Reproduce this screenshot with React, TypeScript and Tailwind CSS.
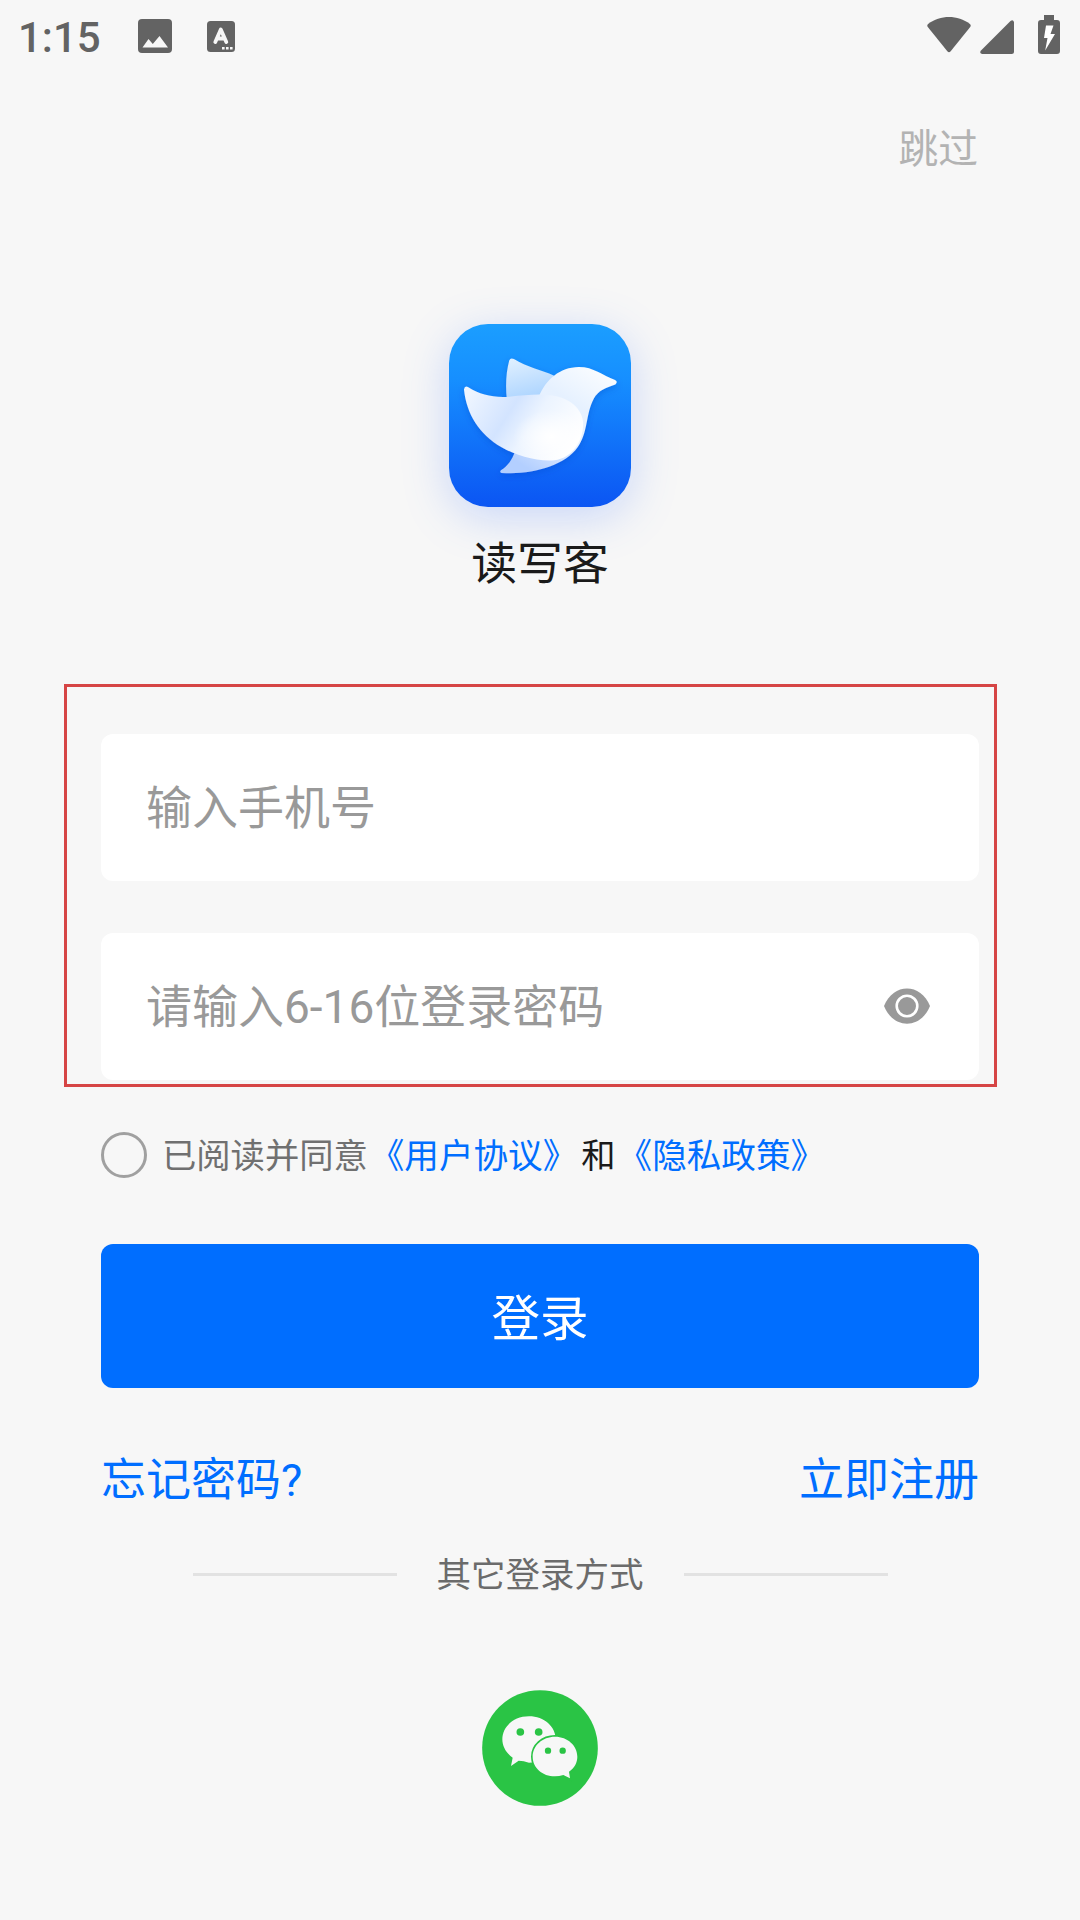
import type { ReactNode } from 'react';

const providerDivider = 'h-[3px] w-[204px] bg-[#e2e2e2]';

function StatusBar() {
  return (
    <header className="flex h-[72px] shrink-0 items-center justify-between pl-[18px] pr-5 text-[#636363]">
      <div className="flex items-center">
        <span className="w-[120px] pt-[3px] text-[42px] font-medium leading-[72px]">1:15</span>
        <svg className="h-[34px] w-[34px]" viewBox="0 0 34 34">
          <rect width="34" height="34" rx="4" fill="currentColor" />
          <path d="M4.500 28.500 10.500 20l4.300 5L21.500 17l8.500 11.500z" fill="#f7f7f7" />
        </svg>
        <svg className="ml-[35px] h-[31px] w-[28px]" viewBox="0 0 28 31">
          <rect width="28" height="31" rx="3.500" fill="currentColor" />
          <path d="M8.300 21 13.800 8.500l5.500 12.500M10.500 17.500h6.600" fill="none" stroke="#f7f7f7" strokeWidth="3.800" strokeLinecap="round" strokeLinejoin="round" />
          <path d="M15 26h2.600v2.600H15zM19 26h2.600v2.600H19zM23 26h2.600v2.600H23z" fill="#f7f7f7" />
        </svg>
      </div>
      <div className="flex items-end pb-[3px]">
        <svg className="mb-px h-[36px] w-[46px]" viewBox="0 0 46 37">
          <path d="M1.500 7.200C14-2.300 32-2.300 44.500 7.200q1.500 1.400.3 3L24.500 35.500q-1.500 1.700-3 0L1.200 10.200q-1.200-1.600.3-3z" fill="currentColor" />
        </svg>
        <svg className="ml-2 h-[34px] w-[34px]" viewBox="0 0 34 34">
          <path d="M1 30.500 30.500 1Q33-.8 34 2v29.500q0 2.500-2.500 2.500H2Q-1 33 1 30.500z" fill="currentColor" />
        </svg>
        <svg className="ml-6 h-[39px] w-[22px]" viewBox="0 0 22 39">
          <path d="M6 0h10v5h3q3 0 3 3v28q0 3-3 3H3q-3 0-3-3V8q0-3 3-3h3z" fill="currentColor" />
          <path d="M8 10.500h7.500L12.500 19H17L7.200 35.500 9.500 23H6z" fill="#fff" />
        </svg>
      </div>
    </header>
  );
}

function BirdLogo() {
  return (
    <svg
      className="h-[183px] w-[182px] rounded-[39px] shadow-[0_10px_46px_rgba(80,130,255,0.28)]"
      viewBox="116 102 547 549"
    >
      <defs>
        <linearGradient id="tile" x1="0" y1="0" x2="0" y2="1">
          <stop offset="0" stopColor="#1b9eff" />
          <stop offset="0.3" stopColor="#168fff" />
          <stop offset="1" stopColor="#0b55f3" />
        </linearGradient>
        <linearGradient id="backWing" x1="0" y1="0" x2="0.3" y2="1">
          <stop offset="0" stopColor="#e2f1ff" />
          <stop offset="1" stopColor="#aed5ff" />
        </linearGradient>
        <linearGradient id="body" x1="1" y1="0" x2="0.3" y2="1">
          <stop offset="0" stopColor="#fff" />
          <stop offset="0.4" stopColor="#e6f1ff" />
          <stop offset="0.65" stopColor="#e9f2ff" />
          <stop offset="1" stopColor="#b3cfff" />
        </linearGradient>
        <linearGradient id="frontWing" x1="0" y1="0.2" x2="1" y2="0.6">
          <stop offset="0" stopColor="#eef5ff" />
          <stop offset="0.38" stopColor="#d3e4ff" />
          <stop offset="0.6" stopColor="#ecf4ff" />
          <stop offset="1" stopColor="#fff" />
        </linearGradient>
        <radialGradient id="belly">
          <stop offset="0" stopColor="#fff" />
          <stop offset="1" stopColor="#fff" stopOpacity="0" />
        </radialGradient>
        <clipPath id="frontWingClip">
          <path d="M173 291C211 316 250 323 298 320C356 314 410 308 455 323C493 337 517 365 519 397C521 454 485 505 433 511C381 515 319 498 274 472C205 431 169 371 161 298Q163 286 173 291z" />
        </clipPath>
        <filter id="birdShadow" x="-20%" y="-20%" width="140%" height="140%">
          <feDropShadow dx="0" dy="8" stdDeviation="10" floodColor="#0540c8" floodOpacity="0.35" />
        </filter>
      </defs>
      <rect x="115" y="101" width="550" height="551" fill="url(#tile)" />
      <g filter="url(#birdShadow)">
        <path d="M290 330C285 285 288 245 297 211Q301 202 311 207C350 232 393 239 432 257L400 330z" fill="url(#backWing)" />
        <path
          d="M385 322C408 267 449 232 506 231C552 231 576 256 615 270Q625 275 616 283C587 293 565 300 551 326C526 373 535 427 502 473C463 528 364 556 274 549Q267 547 272 541C295 526 305 509 314 486z"
          fill="url(#body)"
        />
        <path
          d="M173 291C211 316 250 323 298 320C356 314 410 308 455 323C493 337 517 365 519 397C521 454 485 505 433 511C381 515 319 498 274 472C205 431 169 371 161 298Q163 286 173 291z"
          fill="url(#frontWing)"
        />
        <ellipse cx="424" cy="440" rx="115" ry="80" fill="url(#belly)" clipPath="url(#frontWingClip)" />
      </g>
    </svg>
  );
}

function EyeIcon() {
  return (
    <svg className="mb-[2px] h-9 w-[46px]" viewBox="0 0 46 36">
      <path d="M0 18C9-5.500 37-5.500 46 18C37 41.500 9 41.500 0 18z" fill="#999" />
      <circle cx="23" cy="18" r="10.300" fill="#999" stroke="#fff" strokeWidth="2.600" />
    </svg>
  );
}

function WechatIcon() {
  return (
    <svg className="h-[116px] w-[116px]" viewBox="66 59 348 346">
      <circle cx="240" cy="232" r="173.500" fill="#2ac445" />
      <path d="M207 137C253 137 287 168 287 206C287 248 253 276 207 276Q191 270 176 270L153 286L158 261C139 248 127 228 127 206C127 168 161 137 207 137z" fill="#f7f7f7" />
      <path d="M285 198C323 198 352 225 352 258C352 276 343 292 327 303L330 323L310 313Q298 317 285 317C247 317 218 291 218 258C218 225 247 198 285 198z" fill="#f7f7f7" stroke="#2ac445" strokeWidth="10" paintOrder="stroke" />
      <g fill="#2ac445">
        <circle cx="181" cy="184" r="11.500" />
        <circle cx="236" cy="184" r="11.500" />
        <circle cx="264" cy="240" r="9.500" />
        <circle cx="308" cy="240" r="9.500" />
      </g>
    </svg>
  );
}

function Field({ placeholder, children }: { placeholder: string; children?: ReactNode }) {
  return (
    <div className="flex h-[147px] items-center justify-between rounded-[12px] bg-white pl-[45px] pr-[49px]">
      <span className="pt-px text-[46px] leading-[60px] text-[#999]">{placeholder}</span>
      {children}
    </div>
  );
}

export default function App() {
  return (
    <div className="flex h-[1920px] w-[1080px] flex-col overflow-hidden bg-[#f7f7f7] font-['Roboto','Noto_Sans_CJK_SC',sans-serif]">
      <StatusBar />

      <div className="mt-12 flex justify-end pr-[102px]">
        <button className="text-[39.800px] leading-[60px] text-[#b3b3b3]">跳过</button>
      </div>

      <div className="mt-36 flex flex-col items-center">
        <BirdLogo />
        <h1 className="mt-7 text-[45.800px] leading-[60px] text-[#1a1a1a]">读写客</h1>
      </div>

      <section className="ml-16 mt-[89px] flex w-[933px] flex-col gap-[52px] border-[3px] border-[#d64545] pb-1 pl-[34px] pr-[15px] pt-[47px]">
        <Field placeholder="输入手机号" />
        <Field placeholder="请输入6-16位登录密码">
          <EyeIcon />
        </Field>
      </section>

      <main className="flex flex-col px-[101px]">
        <div className="mt-[45px] flex h-[46px] items-center text-[34.300px] leading-[46px]">
          <span className="h-[46px] w-[46px] rounded-full border-[3px] border-[#a0a0a0]" />
          <span className="ml-[15px] pt-px text-[#707070]">已阅读并同意</span>
          <a className="ml-[2px] pt-px text-[34.600px] text-[#006eff]">《用户协议》</a>
          <span className="ml-1 mr-[2px] pt-px text-[#1a1a1a]">和</span>
          <a className="pt-px text-[34.600px] text-[#006eff]">《隐私政策》</a>
        </div>

        <button className="mt-[66px] h-[144px] rounded-[12px] bg-[#006eff] pt-2 text-[48.500px] text-white">登录</button>

        <div className="mt-[63px] flex justify-between text-[45px] leading-[60px] text-[#006eff]">
          <a>忘记密码?</a>
          <a>立即注册</a>
        </div>

        <div className="mt-10 flex h-[46px] items-center justify-center gap-10 leading-[46px]">
          <span className={providerDivider} />
          <span className="pt-px text-[34.500px] text-[#6b6b6b]">其它登录方式</span>
          <span className={providerDivider} />
        </div>

        <div className="mt-[93px] flex justify-center">
          <WechatIcon />
        </div>
      </main>
    </div>
  );
}
